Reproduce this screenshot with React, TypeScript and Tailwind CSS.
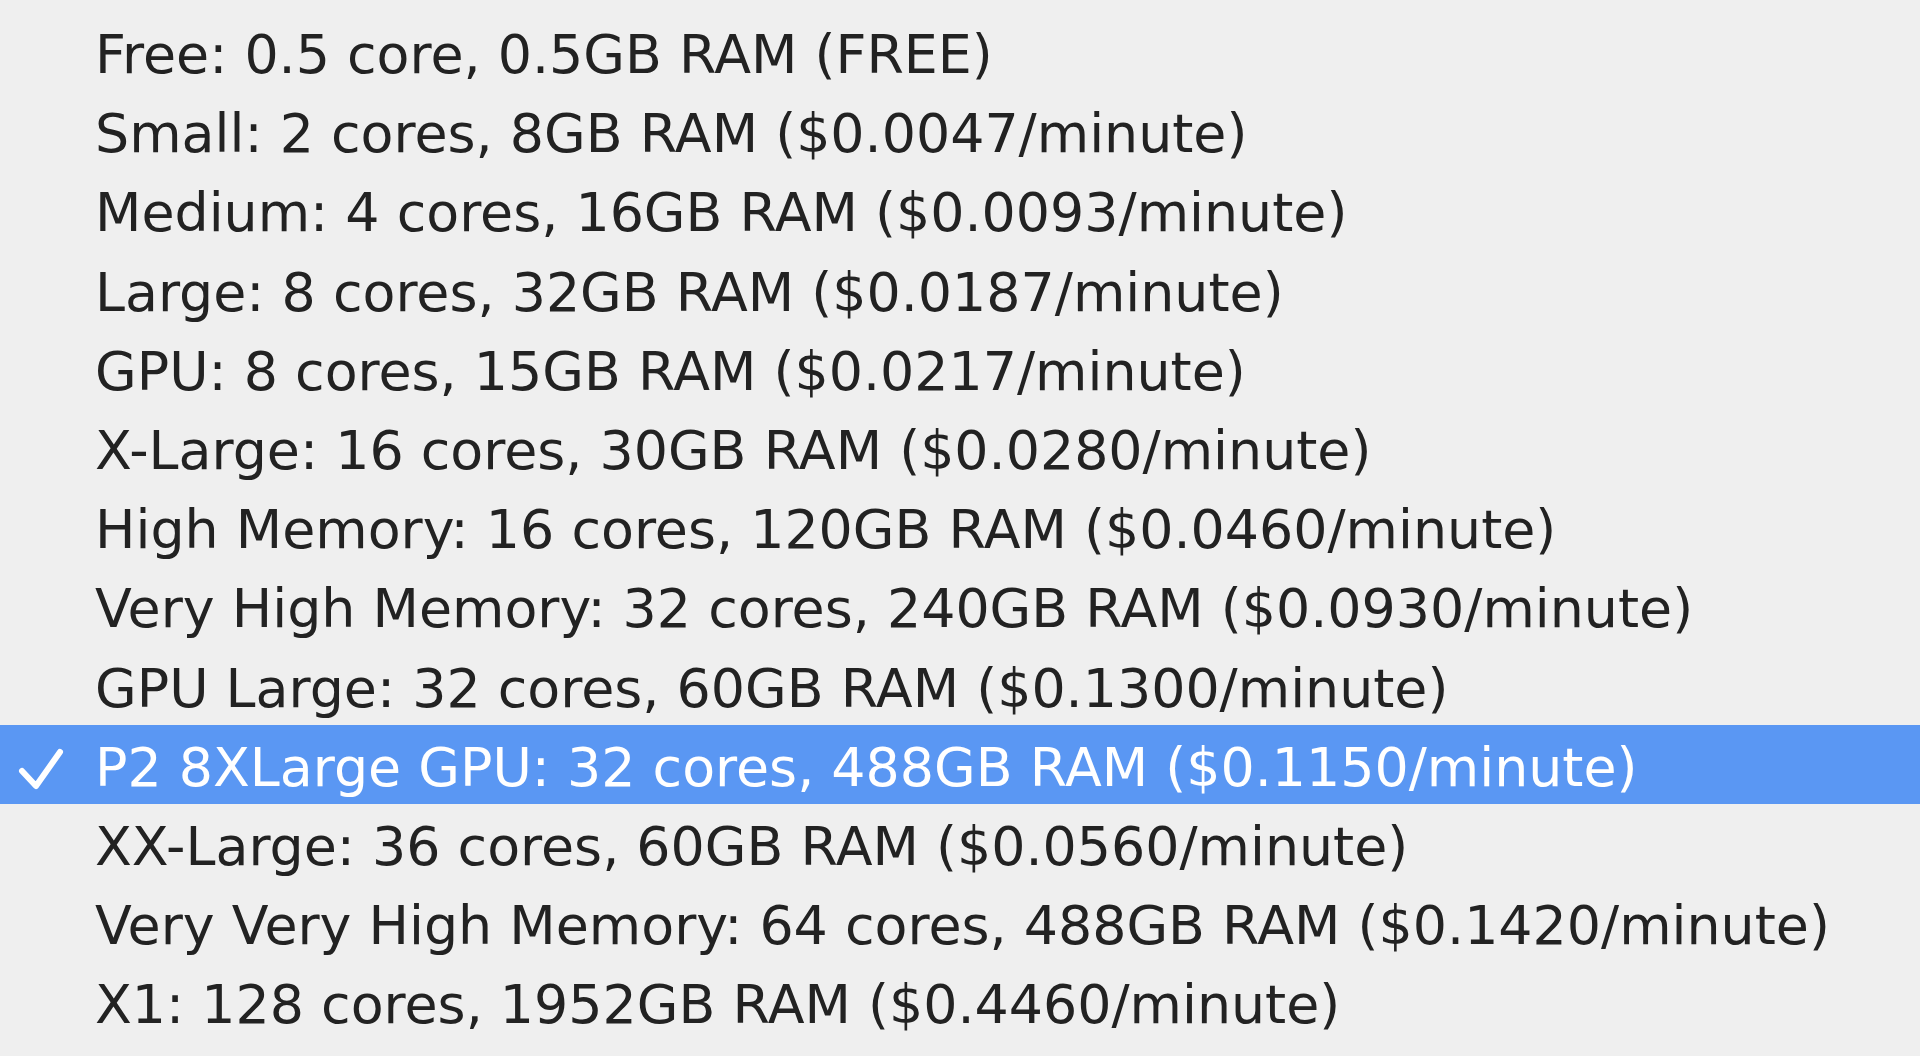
import React from 'react';

const OPTIONS = [
  'Free: 0.5 core, 0.5GB RAM (FREE)',
  'Small: 2 cores, 8GB RAM ($0.0047/minute)',
  'Medium: 4 cores, 16GB RAM ($0.0093/minute)',
  'Large: 8 cores, 32GB RAM ($0.0187/minute)',
  'GPU: 8 cores, 15GB RAM ($0.0217/minute)',
  'X-Large: 16 cores, 30GB RAM ($0.0280/minute)',
  'High Memory: 16 cores, 120GB RAM ($0.0460/minute)',
  'Very High Memory: 32 cores, 240GB RAM ($0.0930/minute)',
  'GPU Large: 32 cores, 60GB RAM ($0.1300/minute)',
  'P2 8XLarge GPU: 32 cores, 488GB RAM ($0.1150/minute)',
  'XX-Large: 36 cores, 60GB RAM ($0.0560/minute)',
  'Very Very High Memory: 64 cores, 488GB RAM ($0.1420/minute)',
  'X1: 128 cores, 1952GB RAM ($0.4460/minute)',
];

const SELECTED = 9;

const Check: React.FC = () => (
  <svg width="48" height="44" viewBox="0 0 48 44" className="shrink-0">
    <path
      d="M5 25 L19 40 L43 6"
      fill="none"
      stroke="white"
      strokeWidth="6"
      strokeLinecap="round"
      strokeLinejoin="round"
    />
  </svg>
);

const App: React.FC = () => {
  return (
    <div className="w-[1920px] h-[1056px] overflow-hidden bg-[#efefef] pt-[12px] font-['DejaVu_Sans',Verdana,sans-serif]">
      <ul>
        {OPTIONS.map((opt, i) => {
          const active = i === SELECTED;
          return (
            <li
              key={opt}
              className={`h-[79.2px] pt-[7px] flex items-center ${
                active ? 'bg-[#5a97f3] text-white' : 'text-[#222222]'
              }`}
            >
              <div className="w-[95px] pl-[17px] flex items-center">{active && <Check />}</div>
              <span className="text-[53.8px] leading-[64px] whitespace-nowrap">{opt}</span>
            </li>
          );
        })}
      </ul>
    </div>
  );
};

export default App;
